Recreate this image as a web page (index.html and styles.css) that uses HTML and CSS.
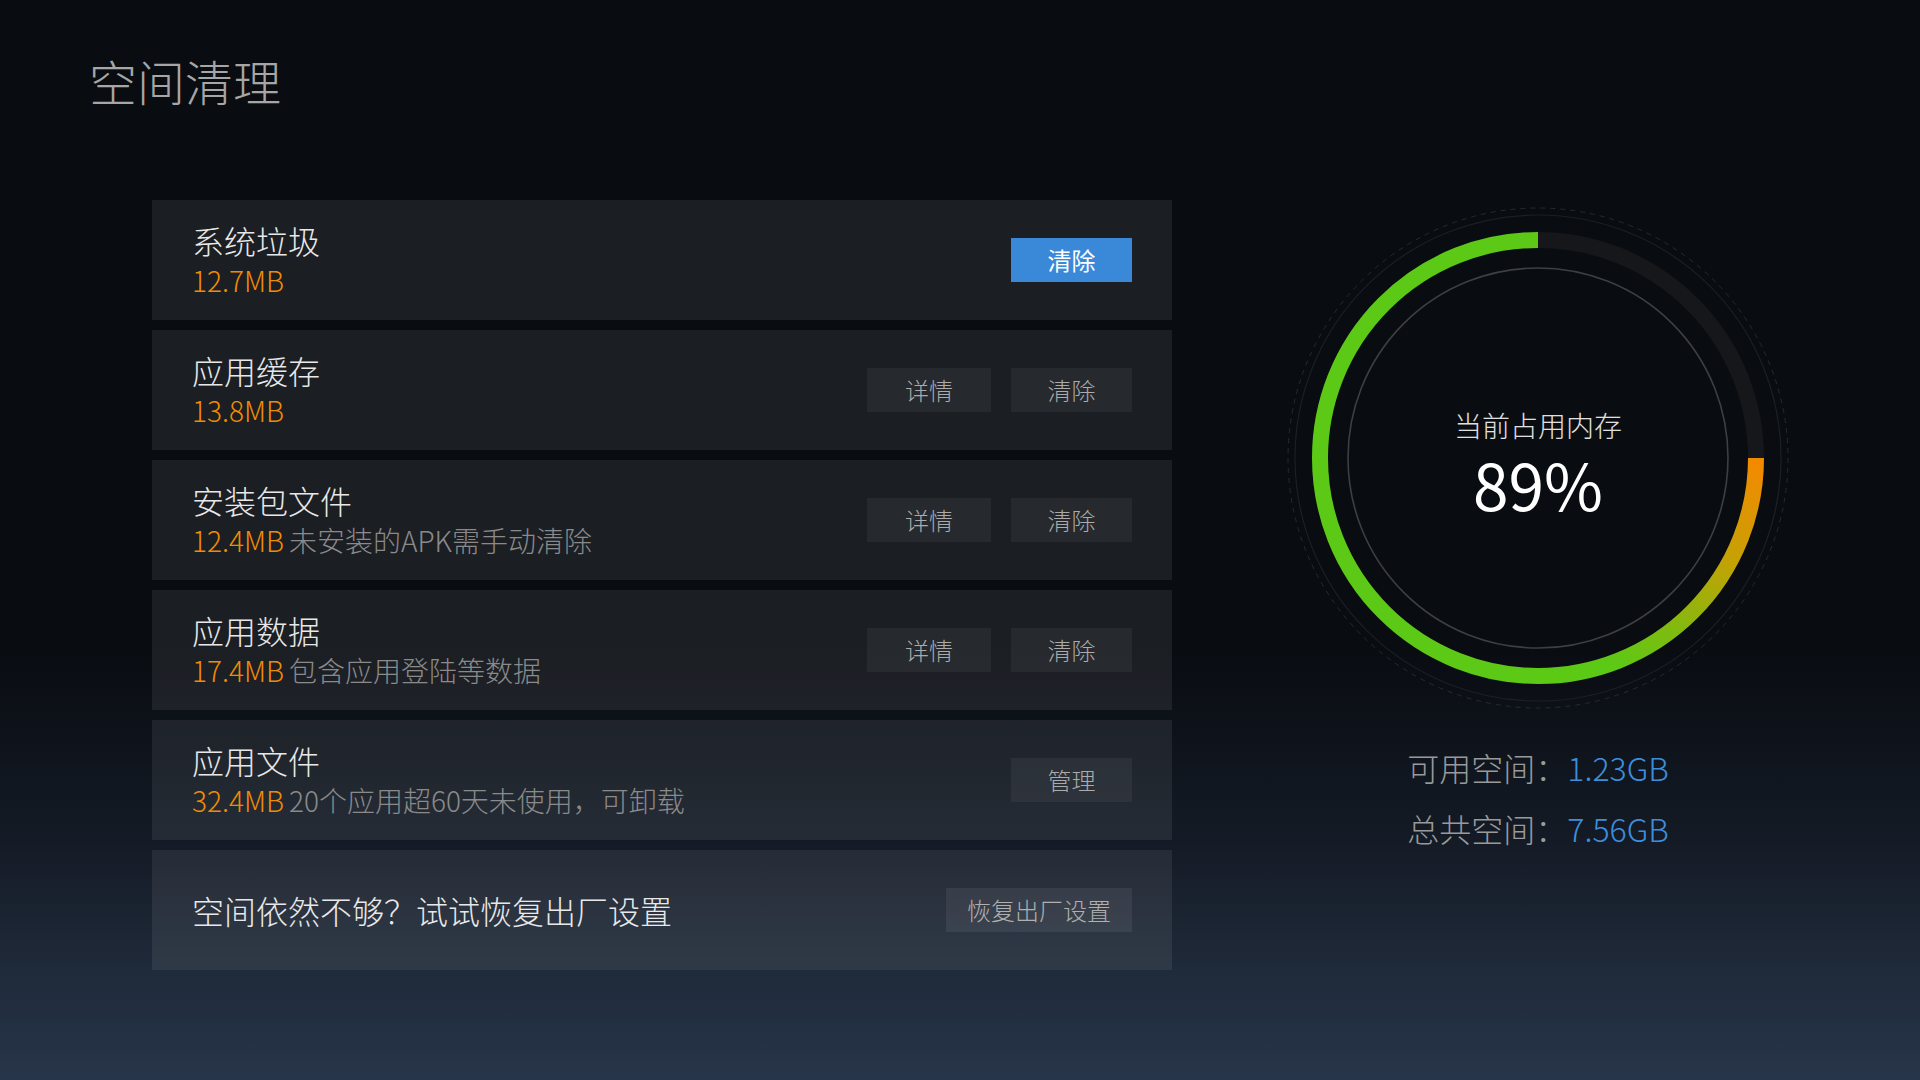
FILE: index.html
```html
<!DOCTYPE html>
<html lang="zh-CN">
<head>
<meta charset="utf-8">
<title>空间清理</title>
<link rel="stylesheet" href="styles.css">
</head>
<body>
<div class="page">
  <h1 class="title">空间清理</h1>
  <div class="content">
    <div class="list">
      <div class="row">
        <div class="info">
          <div class="name">系统垃圾</div>
          <div class="meta"><span class="size">12.7MB</span></div>
        </div>
        <div class="actions">
          <button class="btn btn-primary btn-clear">清除</button>
        </div>
      </div>
      <div class="row">
        <div class="info">
          <div class="name">应用缓存</div>
          <div class="meta"><span class="size">13.8MB</span></div>
        </div>
        <div class="actions">
          <button class="btn btn-detail">详情</button>
          <button class="btn btn-clear">清除</button>
        </div>
      </div>
      <div class="row">
        <div class="info">
          <div class="name">安装包文件</div>
          <div class="meta"><span class="size">12.4MB</span><span class="desc">未安装的APK需手动清除</span></div>
        </div>
        <div class="actions">
          <button class="btn btn-detail">详情</button>
          <button class="btn btn-clear">清除</button>
        </div>
      </div>
      <div class="row">
        <div class="info">
          <div class="name">应用数据</div>
          <div class="meta"><span class="size">17.4MB</span><span class="desc">包含应用登陆等数据</span></div>
        </div>
        <div class="actions">
          <button class="btn btn-detail">详情</button>
          <button class="btn btn-clear">清除</button>
        </div>
      </div>
      <div class="row">
        <div class="info">
          <div class="name">应用文件</div>
          <div class="meta"><span class="size">32.4MB</span><span class="desc">20个应用超60天未使用，可卸载</span></div>
        </div>
        <div class="actions">
          <button class="btn btn-clear">管理</button>
        </div>
      </div>
      <div class="row row-reset">
        <div class="info info-single">
          <div class="name">空间依然不够？试试恢复出厂设置</div>
        </div>
        <div class="actions">
          <button class="btn btn-reset">恢复出厂设置</button>
        </div>
      </div>
    </div>

    <div class="side">
      <div class="gauge">
        <svg class="gauge-svg" width="520" height="516" viewBox="0 0 520 516">
          <defs>
            <linearGradient id="warm" gradientUnits="userSpaceOnUse" x1="478" y1="262" x2="330" y2="462">
              <stop offset="0" stop-color="#f28a00"/>
              <stop offset="0.35" stop-color="#c9a004"/>
              <stop offset="0.75" stop-color="#7fbb10"/>
              <stop offset="1" stop-color="#5cc915"/>
            </linearGradient>
          </defs>
          <circle cx="260" cy="258" r="250" fill="none" stroke="#262a31" stroke-width="1" stroke-dasharray="5 5"/>
          <circle cx="260" cy="258" r="243" fill="none" stroke="#1c1f25" stroke-width="1.2"/>
          <circle cx="260" cy="258" r="218" fill="none" stroke="#16171b" stroke-width="16"/>
          <path d="M 260 476 A 218 218 0 0 1 260 40" fill="none" stroke="#5bc915" stroke-width="16"/>
          <path d="M 478 258 A 218 218 0 0 1 260 476" fill="none" stroke="url(#warm)" stroke-width="16"/>
          <circle cx="260" cy="258" r="190" fill="none" stroke="#3d3f44" stroke-width="1.6"/>
        </svg>
        <div class="gauge-text">
          <div class="gauge-label">当前占用内存</div>
          <div class="gauge-value">89%</div>
        </div>
      </div>
      <div class="stats">
        <div class="stat"><span class="stat-label">可用空间：</span><span class="stat-value">1.23GB</span></div>
        <div class="stat"><span class="stat-label">总共空间：</span><span class="stat-value">7.56GB</span></div>
      </div>
    </div>
  </div>
</div>
</body>
</html>
```

FILE: styles.css
```css
* { box-sizing: border-box; }

html, body {
  margin: 0;
  padding: 0;
  width: 1920px;
  height: 1080px;
  overflow: hidden;
}

body {
  font-family: "Noto Sans CJK SC", "Noto Sans", sans-serif;
  background: linear-gradient(to bottom, #090c11 0%, #090c11 60%, #141b26 78%, #1f2a3a 90%, #27354a 100%);
  color: #e6e6e6;
}

.page {
  width: 1920px;
  height: 1080px;
  padding: 51px 0 0 89px;
}

.title {
  margin: 0;
  font-size: 48px;
  line-height: 58px;
  font-weight: 300;
  color: #a6a6a6;
}

.content {
  display: flex;
  align-items: flex-start;
  margin-top: 91px;
  margin-left: 63px;
}

.list {
  width: 1020px;
  display: flex;
  flex-direction: column;
  gap: 10px;
}

.row {
  height: 120px;
  background: rgba(255, 255, 255, 0.075);
  display: flex;
  align-items: center;
  justify-content: space-between;
  padding: 0 40px;
}

.info {
  display: flex;
  flex-direction: column;
  padding-bottom: 3px;
}

.info-single {
  padding-bottom: 0;
}

.name {
  font-size: 32px;
  line-height: 40px;
  font-weight: 300;
  color: #e8e8e8;
}

.meta {
  margin-top: 2px;
  font-size: 28px;
  line-height: 36px;
  font-weight: 300;
  display: flex;
}

.size { color: #f08c00; }

.desc {
  color: #8a8a8a;
  margin-left: 5px;
}

.actions {
  display: flex;
  gap: 20px;
}

.btn {
  height: 44px;
  border: 0;
  padding: 0;
  margin: 0;
  font-family: inherit;
  font-size: 24px;
  line-height: 44px;
  font-weight: 300;
  color: #ababab;
  background: rgba(255, 255, 255, 0.05);
  text-align: center;
}

.btn-detail { width: 124px; }
.btn-clear { width: 121px; }
.btn-reset { width: 186px; background: rgba(255, 255, 255, 0.065); color: #b0b0b0; }

.btn-primary {
  background: #3a88d8;
  color: #ffffff;
  font-weight: 400;
}

.side {
  margin-left: 106px;
  width: 520px;
  display: flex;
  flex-direction: column;
  align-items: center;
}

.gauge {
  display: grid;
  width: 520px;
  height: 516px;
}

.gauge-svg,
.gauge-text {
  grid-area: 1 / 1;
}

.gauge-text {
  align-self: center;
  justify-self: center;
  padding-top: 10px;
  display: flex;
  flex-direction: column;
  align-items: center;
}

.gauge-label {
  font-size: 28px;
  line-height: 40px;
  font-weight: 300;
  color: #e0e0e0;
}

.gauge-value {
  font-size: 64px;
  line-height: 76px;
  font-weight: 400;
  color: #ffffff;
}

.stats {
  margin-top: 21px;
  display: flex;
  flex-direction: column;
  align-items: center;
}

.stat {
  font-size: 32px;
  line-height: 61px;
  font-weight: 300;
}

.stat-label { color: #9a9a9a; }
.stat-value { color: #3d8edc; }
```
